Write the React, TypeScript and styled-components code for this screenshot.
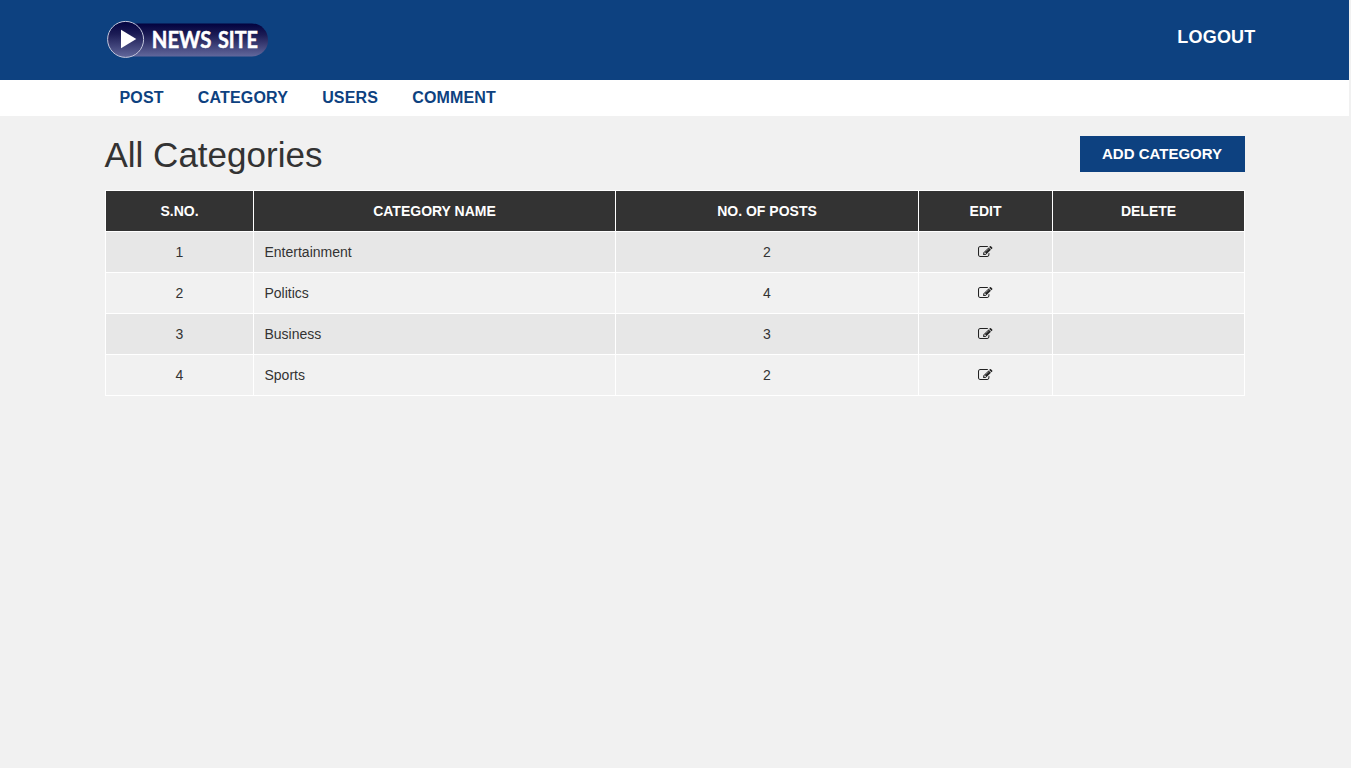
import React from "react";
import styled, { createGlobalStyle } from "styled-components";

const BLUE = "#0d4180";

const GlobalStyle = createGlobalStyle`
  *, *::before, *::after { box-sizing: border-box; }
  html { background: #f1f1f1; }
  body {
    margin: 0;
    background: #f1f1f1;
    color: #333;
    font-family: "Liberation Sans", Arial, sans-serif;
    font-size: 14px;
    line-height: 20px;
  }
`;

const Page = styled.div`
  width: 1349px;
`;

const Container = styled.div`
  width: 1170px;
  margin: 0 auto;
  padding: 0 15px;
`;

const Header = styled.header`
  height: 80px;
  background: ${BLUE};
`;

const HeaderRow = styled(Container)`
  display: flex;
  justify-content: space-between;
  align-items: flex-start;
  padding: 19px 4px 0 15px;
`;

const LogoSvg = styled.svg`
  display: block;
  margin-left: 0.5px;
`;

const Logout = styled.a`
  margin-top: 8px;
  color: #fff;
  font-size: 18px;
  font-weight: 700;
  line-height: 20px;
  letter-spacing: 0.2px;
  text-decoration: none;
`;

const MenuBar = styled.nav`
  height: 36px;
  background: #fff;
`;

const Menu = styled.ul`
  display: flex;
  gap: 4.2px;
  margin: 0;
  padding: 0;
  list-style: none;
`;

const MenuLink = styled.a`
  display: block;
  padding: 6px 15px 7px;
  color: ${BLUE};
  font-size: 16px;
  font-weight: 700;
  line-height: 23px;
  letter-spacing: 0.15px;
  text-decoration: none;
`;

const TitleRow = styled.div`
  display: flex;
  justify-content: space-between;
  align-items: flex-start;
  padding-top: 20px;
  height: 74px;
`;

const Title = styled.h1`
  margin: 0;
  font-size: 35px;
  font-weight: 400;
  line-height: 37px;
`;

const AddButton = styled.a`
  width: 165px;
  height: 36px;
  background: ${BLUE};
  color: #fff;
  font-size: 15px;
  font-weight: 700;
  line-height: 36px;
  text-align: center;
  text-decoration: none;
`;

const Table = styled.table`
  width: 1140px;
  table-layout: fixed;
  border-collapse: collapse;
`;

const HeadCell = styled.th`
  height: 41px;
  padding: 10px 10px 10px 11px;
  border: 1px solid #fff;
  background: #333;
  color: #fff;
  font-size: 14px;
  font-weight: 700;
  line-height: 20px;
`;

const Row = styled.tr`
  &:nth-child(odd) { background: #e7e7e7; }
`;

const Cell = styled.td<{ $align?: "left" | "center" }>`
  height: 41px;
  padding: 10px 10px 10px 11px;
  border: 1px solid #fff;
  text-align: ${(p) => p.$align ?? "center"};
  line-height: 20px;
`;

const EditSvg = styled.svg`
  display: inline-block;
  vertical-align: -2px;
`;

const Logo = () => (
  <LogoSvg width="166" height="42" viewBox="0 0 166 42">
    <defs>
      <linearGradient id="pill" x1="0" y1="0" x2="0" y2="1">
        <stop offset="0" stopColor="#02023f" />
        <stop offset="0.35" stopColor="#1c1c55" />
        <stop offset="1" stopColor="#62689c" />
      </linearGradient>
    </defs>
    <rect x="10" y="4.5" width="153" height="33" rx="16" fill="url(#pill)" />
    <circle cx="20.6" cy="20.4" r="18" fill="url(#pill)" stroke="#c3c7dc" strokeWidth="1" />
    <path d="M16 10.8L31.3 20L16 29.2Z" fill="#fff" />
    <g fill="#fff" fontFamily="Lato, sans-serif" fontSize="22" fontWeight="700" stroke="#fff" strokeWidth="0.5">
      <text x="46.8" y="28.6" textLength="59.5" lengthAdjust="spacingAndGlyphs">
        NEWS
      </text>
      <text x="113" y="28.6" textLength="40" lengthAdjust="spacingAndGlyphs">
        SITE
      </text>
    </g>
  </LogoSvg>
);

const EditIcon = () => (
  <EditSvg width="14.5" height="14" viewBox="0 0 1792 1792" preserveAspectRatio="none" fill="#222">
    <path d="M888 1184l116-116-152-152-116 116v56h96v96h56zm440-720q-16-16-33 1l-350 350q-17 17-1 33t33-1l350-350q17-17 1-33zm80 594v190q0 119-84.5 203.5t-203.5 84.5h-832q-119 0-203.5-84.5t-84.5-203.5v-832q0-119 84.5-203.5t203.5-84.5h832q63 0 117 25 15 7 18 23 3 17-9 29l-49 49q-14 14-32 8-23-6-45-6h-832q-66 0-113 47t-47 113v832q0 66 47 113t113 47h832q66 0 113-47t47-113v-126q0-13 9-22l64-64q15-15 35-7t20 29zm-96-738l288 288-672 672h-288v-288zm444 132l-92 92-288-288 92-92q28-28 68-28t68 28l152 152q28 28 28 68t-28 68z" />
  </EditSvg>
);

const menu = ["POST", "CATEGORY", "USERS", "COMMENT"];

const columns = [
  { label: "S.NO.", width: 148 },
  { label: "CATEGORY NAME", width: 362 },
  { label: "NO. OF POSTS", width: 303 },
  { label: "EDIT", width: 134 },
  { label: "DELETE", width: 192 },
];

const categories = [
  { name: "Entertainment", posts: 2 },
  { name: "Politics", posts: 4 },
  { name: "Business", posts: 3 },
  { name: "Sports", posts: 2 },
];

export default function App() {
  return (
    <>
      <GlobalStyle />
      <Page>
        <Header>
          <HeaderRow>
            <Logo />
            <Logout>LOGOUT</Logout>
          </HeaderRow>
        </Header>
        <MenuBar>
          <Container>
            <Menu>
              {menu.map((item) => (
                <li key={item}>
                  <MenuLink>{item}</MenuLink>
                </li>
              ))}
            </Menu>
          </Container>
        </MenuBar>
        <Container as="main">
          <TitleRow>
            <Title>All Categories</Title>
            <AddButton>ADD CATEGORY</AddButton>
          </TitleRow>
          <Table>
            <colgroup>
              {columns.map((c) => (
                <col key={c.label} width={c.width} />
              ))}
            </colgroup>
            <thead>
              <tr>
                {columns.map((c) => (
                  <HeadCell key={c.label}>{c.label}</HeadCell>
                ))}
              </tr>
            </thead>
            <tbody>
              {categories.map((c, i) => (
                <Row key={c.name}>
                  <Cell>{i + 1}</Cell>
                  <Cell $align="left">{c.name}</Cell>
                  <Cell>{c.posts}</Cell>
                  <Cell>
                    <EditIcon />
                  </Cell>
                  <Cell />
                </Row>
              ))}
            </tbody>
          </Table>
        </Container>
      </Page>
    </>
  );
}
